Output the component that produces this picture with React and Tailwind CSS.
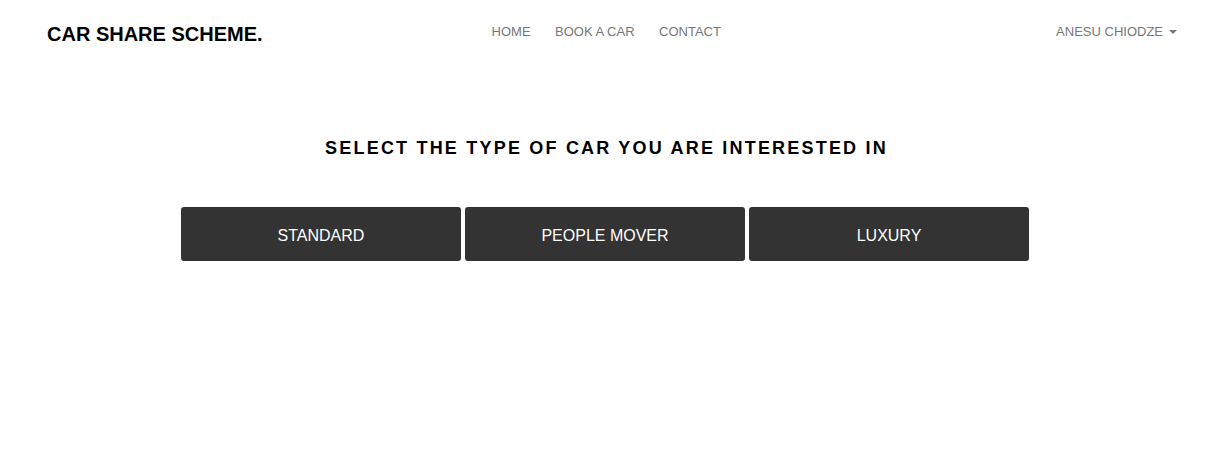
export default function App() {
  return (
    <div className="w-full min-h-[458px] bg-white font-['Liberation_Sans',Arial,sans-serif]">
      <header className="flex items-start h-[62px] pl-[47px] pr-[55px]">
        <div className="mt-[24px] text-[20px] leading-[20px] font-bold text-black whitespace-nowrap">
          CAR SHARE SCHEME.
        </div>
        <nav className="ml-[229px] mt-[25px] flex gap-[24.5px] text-[13px] leading-[14px] text-[#777]">
          <a className="whitespace-nowrap">HOME</a>
          <a className="whitespace-nowrap">BOOK A CAR</a>
          <a className="whitespace-nowrap">CONTACT</a>
        </nav>
        <div className="ml-auto mt-[25px] flex items-center text-[13px] leading-[14px] text-[#777] whitespace-nowrap">
          ANESU CHIODZE
          <span className="ml-[6px] inline-block w-0 h-0 border-t-[4px] border-t-[#777] border-x-[4px] border-x-transparent"></span>
        </div>
      </header>
      <main className="ml-[181px] w-[848px]">
        <h1 className="mt-[77px] pl-[3px] text-center text-[18px] leading-[18px] font-bold tracking-[2.2px] text-black whitespace-nowrap">
          SELECT THE TYPE OF CAR YOU ARE INTERESTED IN
        </h1>
        <div className="mt-[50px] flex gap-[4px]">
          <button className="w-[280px] h-[54px] pt-[4px] rounded-[3px] bg-[#333] text-white text-[16px]">STANDARD</button>
          <button className="w-[280px] h-[54px] pt-[4px] rounded-[3px] bg-[#333] text-white text-[16px]">PEOPLE MOVER</button>
          <button className="w-[280px] h-[54px] pt-[4px] rounded-[3px] bg-[#333] text-white text-[16px]">LUXURY</button>
        </div>
      </main>
    </div>
  );
}
